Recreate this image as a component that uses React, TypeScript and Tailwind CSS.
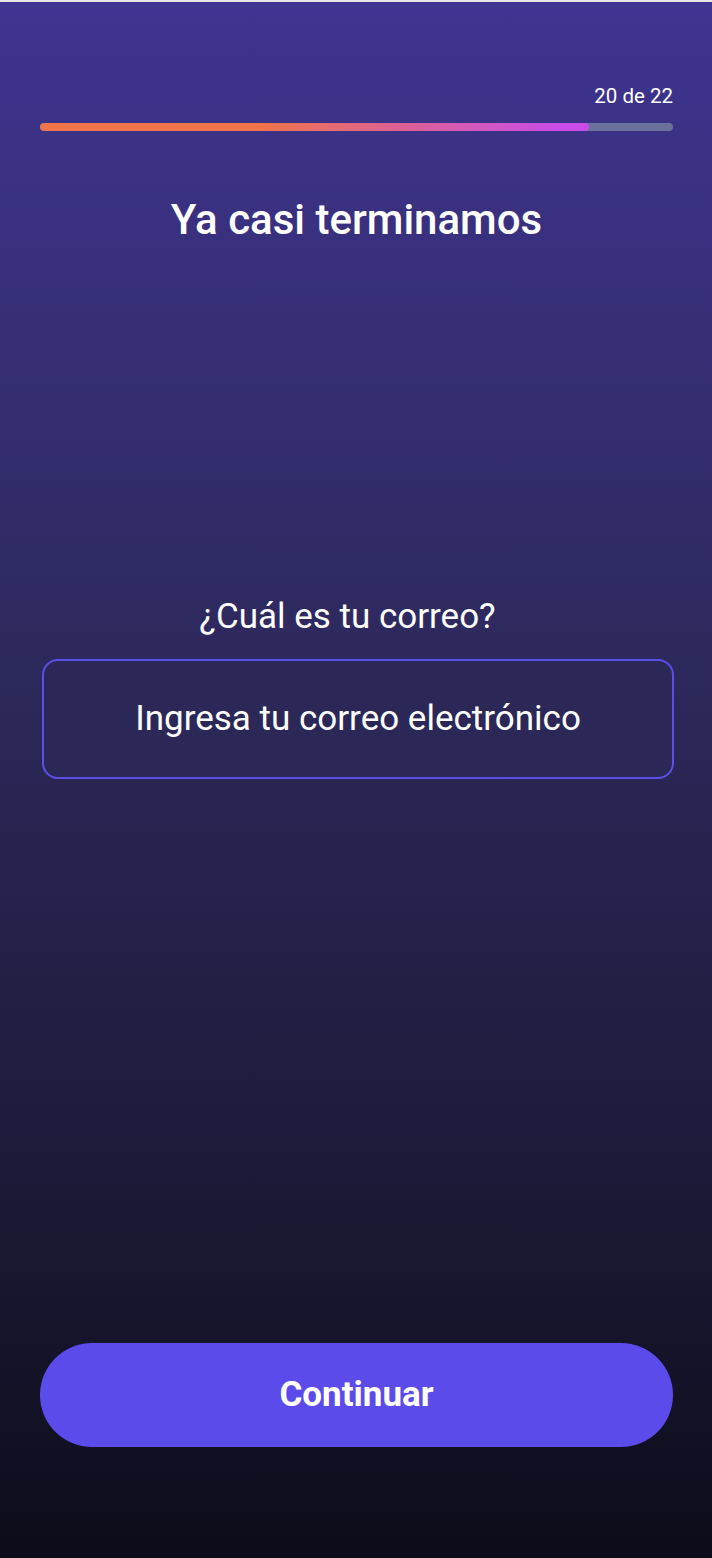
import React from "react";

export default function App() {
  return (
    <div
      className="w-[712px] h-[1558px] flex flex-col bg-[linear-gradient(to_bottom,#3f3491_0%,#2e2a5f_40%,#1c1a38_75%,#0d0c1a_100%)] text-white"
      style={{ fontFamily: "Roboto, 'Noto Sans', sans-serif" }}
    >
      <div className="h-[2px] bg-[#e6e6e6]" />
      <div className="pl-[40px] pr-[39px] pt-[82px] flex flex-col">
        <div className="flex justify-end text-[20.5px] leading-[24px]">20 de 22</div>
        <div className="mt-[15px] h-[8px] rounded-full bg-[#6a7299] overflow-hidden">
          <div className="h-full w-[549px] rounded-full bg-[linear-gradient(to_right,#ef744a_0%,#ee744b_40%,#c94ce8_95%)]" />
        </div>
        <h1 className="mt-[65px] text-center text-[42px] leading-[48px] font-medium">Ya casi terminamos</h1>
      </div>
      <div className="mt-[352px] pl-[42px] pr-[38px] flex flex-col">
        <p className="text-center text-[35px] leading-[42px] mb-[21px] pr-[21px]">¿Cuál es tu correo?</p>
        <div className="h-[120px] rounded-[16px] border-2 border-[#5b4fe8] bg-[#2b2858] flex items-center justify-center">
          <span className="text-[35px] leading-[42px] text-white">Ingresa tu correo electrónico</span>
        </div>
      </div>
      <div className="flex-1" />
      <div className="pl-[40px] pr-[39px] pb-[111px]">
        <button className="w-full h-[104px] rounded-full bg-[#5b4bea] text-[35px] font-bold text-white">
          Continuar
        </button>
      </div>
    </div>
  );
}
